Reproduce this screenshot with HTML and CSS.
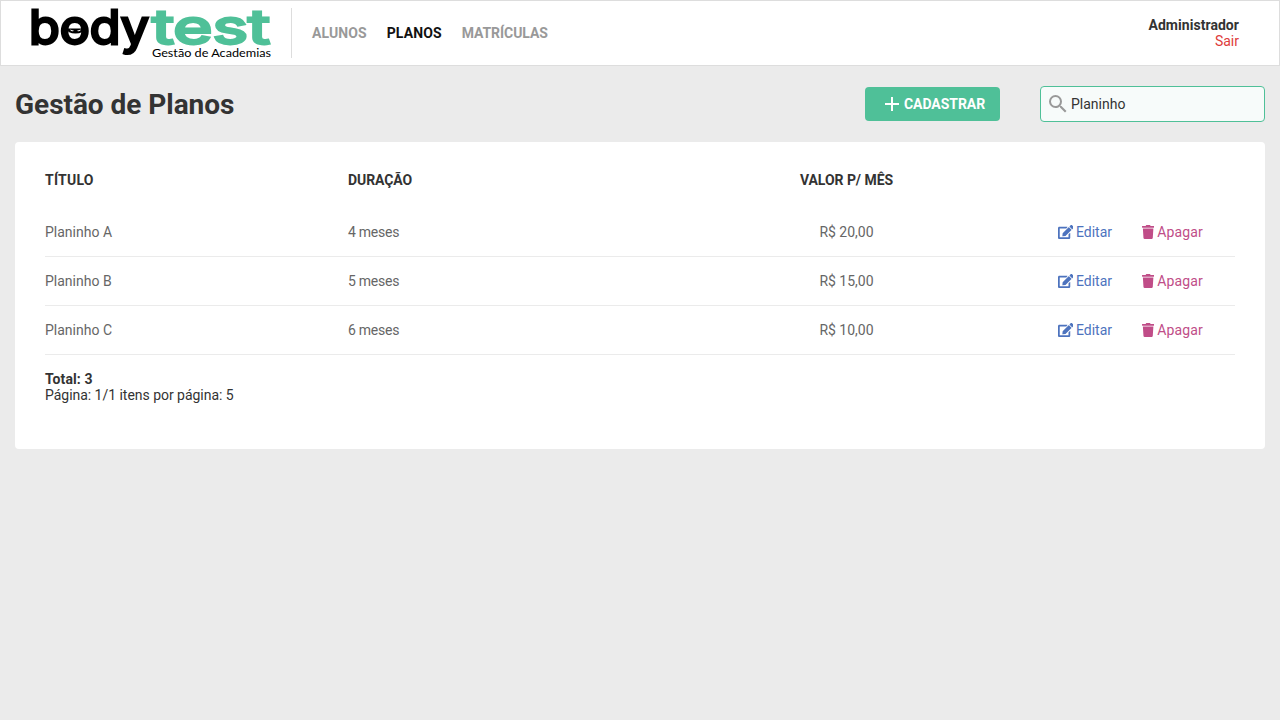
FILE: index.html
```html
<!DOCTYPE html>
<html lang="pt-BR">
<head>
<meta charset="utf-8">
<title>Gestão de Planos</title>
<link rel="stylesheet" href="styles.css">
</head>
<body>
<svg class="sprites" aria-hidden="true">
  <symbol id="edit" viewBox="0 0 576 512"><path d="M402.6 83.2l90.2 90.2c3.8 3.8 3.8 10 0 13.8L274.4 405.6l-92.8 10.3c-12.4 1.4-22.9-9.1-21.5-21.5l10.3-92.8L388.800 83.200c3.800-3.800 10-3.800 13.800 0zm162-22.900l-48.800-48.800c-15.200-15.200-39.900-15.200-55.200 0l-35.400 35.400c-3.800 3.800-3.800 10 0 13.800l90.200 90.200c3.800 3.800 10 3.800 13.800 0l35.400-35.400c15.200-15.300 15.200-40 0-55.200zM384 346.200V448H64V128h229.800c3.200 0 6.200-1.300 8.500-3.500l40-40c7.600-7.600 2.200-20.500-8.500-20.500H48C21.500 64 0 85.500 0 112v352c0 26.500 21.500 48 48 48h352c26.500 0 48-21.500 48-48V306.200c0-10.700-12.900-16-20.500-8.500l-40 40c-2.200 2.300-3.500 5.300-3.500 8.500z"/></symbol>
  <symbol id="trash" viewBox="0 0 448 512"><path d="M432 32H312l-9.400-18.700A24 24 0 0 0 281.100 0H166.800a23.720 23.720 0 0 0-21.400 13.300L136 32H16A16 16 0 0 0 0 48v32a16 16 0 0 0 16 16h416a16 16 0 0 0 16-16V48a16 16 0 0 0-16-16zM53.200 467a48 48 0 0 0 47.900 45h245.800a48 48 0 0 0 47.900-45L416 128H32z"/></symbol>
</svg>
<header class="topbar">
  <svg class="logo" viewBox="0 0 240 50" width="240" height="50">
    <text class="word" x="-2" y="35.500" textLength="120" lengthAdjust="spacingAndGlyphs">body</text>
    <text class="word green" x="121" y="35.500" textLength="118" lengthAdjust="spacingAndGlyphs">test</text>
    <path d="M36 20.500h17l-1.500 3.500q-7 3-14 0z"/>
    <path class="eyes" d="M39 21.500l4 1.300q-3 1.500-4-1.300zM50 21.500l-4 1.300q3 1.500 4-1.300z"/>
    <text class="tagline" x="121" y="49" textLength="119" lengthAdjust="spacingAndGlyphs">Gestão de Academias</text>
  </svg>
  <nav class="menu"><a class="students">ALUNOS</a><a class="active">PLANOS</a><a class="enrolments">MATRÍCULAS</a></nav>
  <div class="profile"><strong>Administrador</strong><a>Sair</a></div>
</header>
<main class="content">
  <div class="heading">
    <h1>Gestão de Planos</h1>
    <button class="add"><svg width="24" height="24" viewBox="0 0 24 24"><path d="M19 13h-6v6h-2v-6H5v-2h6V5h2v6h6v2z"/></svg>CADASTRAR</button>
    <label class="search"><svg width="24" height="24" viewBox="0 0 24 24"><path d="M15.500 14h-.79l-.28-.27A6.471 6.471 0 0 0 16 9.500 6.500 6.500 0 1 0 9.500 16c1.610 0 3.090-.59 4.230-1.570l.27.28v.79l5 4.990L20.490 19l-4.990-5zm-6 0C7.010 14 5 11.990 5 9.500S7.010 5 9.500 5 14 7.010 14 9.500 11.990 14 9.500 14z"/></svg><input value="Planinho"></label>
  </div>
  <section class="card">
    <div class="row head"><span class="title">TÍTULO</span><span class="duration">DURAÇÃO</span><span class="price">VALOR P/ MÊS</span></div>
    <div class="row"><span>Planinho A</span><span class="duration">4 meses</span><span class="price">R$ 20,00</span><div class="actions"><a class="edit"><svg><use href="#edit"/></svg>Editar</a><a class="delete"><svg><use href="#trash"/></svg>Apagar</a></div></div>
    <div class="row"><span>Planinho B</span><span class="duration">5 meses</span><span class="price">R$ 15,00</span><div class="actions"><a class="edit"><svg><use href="#edit"/></svg>Editar</a><a class="delete"><svg><use href="#trash"/></svg>Apagar</a></div></div>
    <div class="row"><span>Planinho C</span><span class="duration">6 meses</span><span class="price">R$ 10,00</span><div class="actions"><a class="edit"><svg><use href="#edit"/></svg>Editar</a><a class="delete"><svg><use href="#trash"/></svg>Apagar</a></div></div>
    <footer class="summary"><strong>Total: 3</strong><span>Página: 1/1 itens por página: 5</span></footer>
  </section>
</main>
</body>
</html>
```

FILE: styles.css
```css
* { box-sizing: border-box; margin: 0; padding: 0; }
body { background: #ebebeb; color: #333; font: 14px/16px Roboto, sans-serif; -webkit-font-smoothing: antialiased; }
.sprites { display: none; }
.topbar { height: 66px; display: flex; align-items: center; background: #fff; border: 1px solid #ddd; padding: 0 40px 0 30px; }
.logo { display: block; overflow: visible; }
.word { font: 400 47px Inter, sans-serif; fill: #000; stroke: #000; stroke-width: 2.8px; }
.green { fill: #4fc098; stroke: #4fc098; }
.eyes { fill: #fff; }
.tagline { font: 11px Lato, sans-serif; fill: #000; }
.menu { display: flex; align-items: center; gap: 20px; height: 50px; margin-left: 20px; padding-left: 20px; border-left: 1px solid #ddd; color: #999; font-weight: 700; }
.menu .active { color: #111; }
.menu .students, .menu .active { letter-spacing: .1px; }
.menu .enrolments { letter-spacing: -.05px; }
.profile { display: flex; flex-direction: column; align-items: flex-end; margin-left: auto; }
.profile strong { letter-spacing: .05px; }
.profile a { color: #de3b3b; }
.content { padding: 20px 15px; }
.heading { display: flex; align-items: center; height: 36px; }
h1 { font-size: 28px; line-height: 36px; padding-top: 1px; letter-spacing: -.04px; }
.add { display: flex; align-items: center; width: 135px; height: 34px; margin: 0 40px 0 auto; padding-left: 15px; border: 0; border-radius: 4px; background: #4fc098; color: #fff; font: 700 14px Roboto, sans-serif; letter-spacing: -.05px; }
.add svg { fill: #fff; }
.search { display: flex; align-items: center; width: 225px; height: 36px; padding-left: 5px; border: 1px solid #4fc098; border-radius: 4px; background: #f7fbfa; }
.search svg { flex: none; fill: #999; }
.search input { width: 180px; margin-left: 1px; border: 0; outline: 0; background: transparent; color: #333; font: 14px Roboto, sans-serif; }
.card { height: 307px; margin-top: 20px; padding: 30px; border-radius: 4px; background: #fff; }
.row { display: grid; grid-template-columns: 303px 403px 191px 1fr; align-items: center; height: 49px; border-bottom: 1px solid #ebebeb; color: #666; }
.head { height: 16px; margin-bottom: 20px; border: 0; color: #333; font-weight: 700; }
.title { letter-spacing: .25px; }
.duration { letter-spacing: -.25px; }
.head .duration { letter-spacing: -.1px; }
.head .price { letter-spacing: -.05px; }
.price { text-align: center; }
.actions { display: flex; justify-content: flex-end; gap: 30px; padding-right: 32px; }
.actions a { display: flex; align-items: center; }
.actions svg { height: 14px; margin-right: 3px; fill: currentColor; }
.edit { color: #4d73be; }
.edit svg { width: 15.75px; margin-right: 2.5px; }
.delete { color: #c04d88; letter-spacing: .15px; }
.delete svg { width: 12.25px; }
.summary { display: flex; flex-direction: column; margin-top: 16px; }
.summary strong { letter-spacing: .1px; }
.summary span { letter-spacing: -.03px; }
```
